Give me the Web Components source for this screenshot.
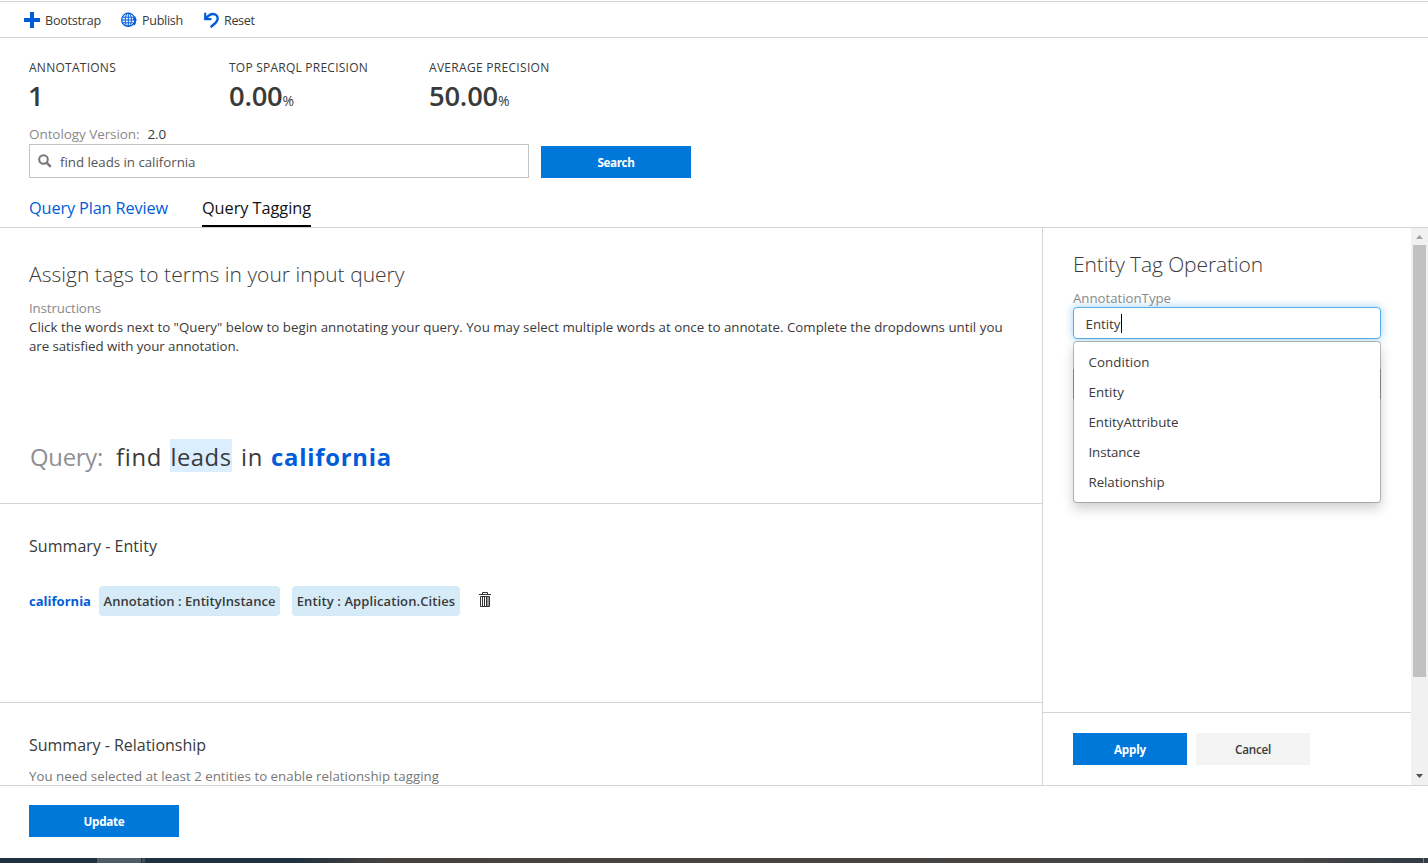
<!DOCTYPE html>
<html lang="en">
<head>
<meta charset="utf-8">
<title>Query Tagging</title>
<style>
html,body{margin:0;height:100%;overflow:hidden;background:#fff}
body{font-family:"Open Sans","Noto Sans",sans-serif;color:#3a3a3a}
</style>
</head>
<body>
<tagging-app></tagging-app>
<script>
const texts = [];
function define(name, html, setup) {
  customElements.define(name, class extends HTMLElement {
    constructor() {
      super();
      this.attachShadow({mode: 'open'}).innerHTML = html;
    }
    connectedCallback() { if (setup) setup(this, this.shadowRoot); }
  });
}

/* One line of text; w is its width in px, s its size, h its line height. */
define('ui-text', `<style>
:host{display:block;white-space:pre;flex:none}
span{display:inline-block;white-space:pre}
</style><span><slot></slot></span>`, (el) => {
  const a = n => el.getAttribute(n);
  if (a('s')) el.style.fontSize = a('s') + 'px';
  if (a('h')) { el.style.lineHeight = a('h') + 'px'; el.style.height = a('h') + 'px'; }
  if (a('wt')) el.style.fontWeight = a('wt');
  if (a('c')) el.style.color = a('c');
  texts.push(el);
});

define('ui-icon', `<style>:host{display:block;flex:none}svg{display:block}</style><div></div>`, (el, root) => {
  const icons = {
    plus: '<svg width="16" height="16" viewBox="0 0 16 16"><path fill="#015cda" d="M6 0h4v6h6v4h-6v6H6v-6H0V6h6z"/></svg>',
    globe: '<svg width="16" height="16" viewBox="0 0 16 16" fill="none" stroke="#015cda"><circle cx="7.3" cy="7.8" r="6.6" stroke-width="1.3"/><ellipse cx="7.3" cy="7.8" rx="3.1" ry="6.6"/><path d="M7.3 1v13.6M1.2 5.2h12.2M.7 8h10M1.4 10.8h11"/><path d="M13 13c1.2-1.6 1.5-3.700 1.200-5.500" stroke-width="1.600"/><path d="M10.600 8.500 14 4l2 4.600z" fill="#015cda" stroke="none"/></svg>',
    undo: '<svg width="15" height="16" viewBox="0 0 15 16" fill="none" stroke="#015cda"><path d="M1.200.800v6.400h6.200" stroke-width="2.200"/><path d="M1.800 6.600C4.200 3.700 6.400 2 8.900 2c2.800 0 4.800 2 4.800 4.500 0 1.900-.9 3.200-2.300 4.500L6.600 15.200" stroke-width="2.400"/></svg>',
    search: '<svg width="14" height="14" viewBox="0 0 14 14" fill="none" stroke="#777"><circle cx="5.500" cy="5.500" r="4.300" stroke-width="2"/><path d="m8.800 8.800 4 4" stroke-width="2.400"/></svg>',
    trash: '<svg width="12" height="16" viewBox="0 0 12 16" fill="none" stroke="#333"><path d="M0 2.500h12M3.500 2V.500h5V2M1.500 4.500h9v10h-9zM3.500 5v9M5.500 5v9M7.500 5v9M9 5v9"/></svg>'
  };
  root.querySelector('div').innerHTML = icons[el.getAttribute('name')];
});

define('command-item', `<style>
:host{display:flex;align-items:center;font-size:13px}
</style><slot name="icon"></slot><slot></slot>`);

define('command-bar', `<style>
:host{display:flex;align-items:center;height:35px;margin-top:1px;padding-left:24px;border-top:1px solid #d4d4d4;border-bottom:1px solid #d4d4d4}
command-item{gap:5px}
ui-text{padding-top:2px}
</style>
<command-item style="width:97px"><ui-icon slot="icon" name="plus"></ui-icon><ui-text w="56" s="12.6" h="18">Bootstrap</ui-text></command-item>
<command-item style="width:83px"><ui-icon slot="icon" name="globe"></ui-icon><ui-text w="41" s="12.6" h="18">Publish</ui-text></command-item>
<command-item><ui-icon slot="icon" name="undo"></ui-icon><ui-text w="30.500" s="12.6" h="18">Reset</ui-text></command-item>`);

define('metric-tile', `<style>
:host{display:block;width:200px}
div{display:flex;align-items:baseline;margin-top:4px;height:32px}
</style><slot name="label"></slot><div><slot></slot></div>`);

define('ui-button', `<style>
:host{display:flex;align-items:center;justify-content:center;box-sizing:border-box;height:32px;width:150px;padding-bottom:1px;background:#0078d9;color:#fff;font-weight:700;flex:none}
:host([plain]){background:#f3f3f3;color:#3a3a3a;font-weight:600}
</style><slot></slot>`);

define('search-field', `<style>
:host{display:flex;align-items:center;box-sizing:border-box;width:500px;height:34px;border:1px solid #c3c3c3;padding-left:8px;gap:8px;color:#555}
ui-icon{margin-top:-1px}
::slotted(ui-text){padding-top:2px}
</style><ui-icon name="search"></ui-icon><slot></slot>`);

define('page-header', `<style>
:host{display:block;box-sizing:border-box;height:190px;padding:22px 0 0 29px;border-bottom:1px solid #d4d4d4}
.row{display:flex}
.version{gap:8px;margin-top:13px}
.search{gap:12px;align-items:flex-end;margin-top:1px}
.tabs{gap:34px;margin-top:16px}
.tab{box-sizing:border-box;height:33px;padding-top:2px}
.on{border-bottom:2px solid #000;width:109px;color:#111}
</style>
<div class="row">
<metric-tile><ui-text slot="label" w="87" s="12" h="16">ANNOTATIONS</ui-text><ui-text s="27.400" h="32" wt="600" style="margin-left:-1px">1</ui-text></metric-tile>
<metric-tile><ui-text slot="label" w="139" s="12" h="16">TOP SPARQL PRECISION</ui-text><ui-text w="53.500" s="27.400" h="32" wt="560">0.00</ui-text><ui-text w="13" s="14" h="32" wt="500">%</ui-text></metric-tile>
<metric-tile><ui-text slot="label" w="120.500" s="12" h="16">AVERAGE PRECISION</ui-text><ui-text w="69" s="27.400" h="32" wt="560">50.00</ui-text><ui-text w="13" s="14" h="32" wt="500">%</ui-text></metric-tile>
</div>
<div class="row version"><ui-text w="110.500" s="13.500" h="18" c="#8a8a8a">Ontology Version:</ui-text><ui-text w="18.500" s="13.500" h="18">2.0</ui-text></div>
<div class="row search"><search-field><ui-text w="135.500" s="13.300" h="18">find leads in california</ui-text></search-field><ui-button><ui-text w="37" s="11.700" h="18">Search</ui-text></ui-button></div>
<div class="row tabs"><div class="tab"><ui-text w="139" s="16.300" h="24" c="#015cda">Query Plan Review</ui-text></div><div class="tab on"><ui-text w="109" s="16.300" h="24">Query Tagging</ui-text></div></div>`);

define('page-section', `<style>
:host{display:block;box-sizing:border-box;padding-left:29px;border-bottom:1px solid #d4d4d4}
:host(:last-of-type){border-bottom:0}
</style><slot></slot>`);

define('query-line', `<style>
:host{display:flex;align-items:center;margin:83px 0 0 1px;height:33px}
ui-text{padding-top:2px;margin-bottom:-2px}
.mark{background:#daeeff;width:62px;height:33px;display:flex;justify-content:center;margin:0 9px 0 8px}
</style>
<ui-text w="73" s="23.800" h="33" c="#8f8f94" style="width:86px">Query:</ui-text>
<ui-text w="46" s="23.800" h="33">find</ui-text>
<div class="mark"><ui-text w="61" s="23.800" h="33">leads</ui-text></div>
<ui-text w="22" s="23.800" h="33" style="width:30px">in</ui-text>
<ui-text w="121" s="23.800" h="33" wt="700" c="#015cda">california</ui-text>`);

define('tag-chip', `<style>
:host{display:flex;align-items:center;justify-content:center;height:30px;background:#d6ebf8;border-radius:4px;font-weight:600;flex:none}
</style><slot></slot>`);

define('entity-row', `<style>
:host{display:flex;align-items:center;height:30px;margin-top:28px}
</style>
<ui-text w="62" s="13" h="18" wt="700" c="#015cda" style="width:70px">california</ui-text>
<tag-chip style="width:181px"><ui-text w="172" s="13" h="18">Annotation : EntityInstance</ui-text></tag-chip>
<tag-chip style="width:168px;margin-left:12px"><ui-text w="158.500" s="13" h="18">Entity : Application.Cities</ui-text></tag-chip>
<ui-icon name="trash" style="margin:-2px 0 0 19px"></ui-icon>`);

define('tagging-pane', `<style>
:host{display:block;width:1042px;height:557px;overflow:hidden;border-right:1px solid #d4d4d4}
</style>
<page-section style="height:276px;padding-top:31px">
<ui-text w="375.500" s="21" h="30" wt="300">Assign tags to terms in your input query</ui-text>
<ui-text w="72" s="13.300" h="19" c="#8a8a8a" style="margin-top:10px">Instructions</ui-text>
<ui-text w="973.500" s="13.300" h="19">Click the words next to "Query" below to begin annotating your query. You may select multiple words at once to annotate. Complete the dropdowns until you</ui-text>
<ui-text w="210" s="13.300" h="19">are satisfied with your annotation.</ui-text>
<query-line></query-line>
</page-section>
<page-section style="height:199px;padding-top:30px"><ui-text w="128" s="16" h="24">Summary - Entity</ui-text><entity-row></entity-row></page-section>
<page-section style="padding-top:30px"><ui-text w="177" s="16" h="24">Summary - Relationship</ui-text><ui-text w="410" s="13.300" h="19" c="#777" style="margin-top:10px">You need selected at least 2 entities to enable relationship tagging</ui-text></page-section>`);

define('type-menu', `<style>
:host{display:block;position:absolute;z-index:2;top:34px;left:0;box-sizing:border-box;width:308px;height:162px;padding:5px 0 0 14.500px;background:#fff;background-clip:padding-box;border:1px solid rgba(0,0,0,.24);border-radius:4px;box-shadow:0 6px 12px rgba(0,0,0,.18)}
</style>
<ui-text w="61" s="13.300" h="30">Condition</ui-text>
<ui-text w="35.500" s="13.300" h="30">Entity</ui-text>
<ui-text w="90" s="13.300" h="30">EntityAttribute</ui-text>
<ui-text w="51.500" s="13.300" h="30">Instance</ui-text>
<ui-text w="76" s="13.300" h="30">Relationship</ui-text>`);

define('type-combo', `<style>
:host{display:block;position:relative;width:308px}
.input{display:flex;align-items:center;box-sizing:border-box;height:32px;padding-left:11.500px;border:1px solid #5aade8;border-radius:4px;box-shadow:0 0 8px rgba(90,173,232,.6);background:#fff}
.input ui-text{padding-top:2px}
i{width:1px;height:19px;background:#000}
.next{box-sizing:border-box;height:30px;margin-top:30px;border:1px solid #bbb}
</style>
<div class="input"><ui-text w="35" s="13.300" h="28">Entity</ui-text><i></i></div>
<div class="next"></div>
<type-menu></type-menu>`);

define('operation-pane', `<style>
:host{display:flex;flex-direction:column;width:368px;height:557px}
.body{flex:1;padding:21px 0 0 30px}
.foot{display:flex;gap:9px;box-sizing:border-box;height:73px;padding:20px 0 0 30px;border-top:1px solid #d4d4d4}
</style>
<div class="body"><ui-text w="190" s="21" h="30" wt="300">Entity Tag Operation</ui-text><ui-text w="98" s="13.300" h="18" c="#8a8a8a" style="margin:10px 0 0">AnnotationType</ui-text><type-combo></type-combo></div>
<div class="foot"><ui-button style="width:114px"><ui-text w="32" s="11.700" h="18">Apply</ui-text></ui-button><ui-button plain style="width:114px"><ui-text w="36" s="11.700" h="18">Cancel</ui-text></ui-button></div>`);

define('scroll-bar', `<style>
:host{display:flex;flex-direction:column;align-items:center;box-sizing:border-box;width:17px;height:557px;background:#f1f1f1}
svg{display:block}
.thumb{width:13px;height:432px;background:#c1c1c1}
.gap{flex:1}
</style>
<svg width="17" height="17"><path fill="#a3a3a3" d="M5 11 8.500 7 12 11z"/></svg><div class="thumb"></div><div class="gap"></div><svg width="17" height="17"><path fill="#505050" d="M5 6h7L8.500 10z"/></svg>`);

define('task-strip', `<style>
:host{display:flex;height:5px;background:linear-gradient(90deg,#1f303f 0,#1f303f 290px,#454240 380px,#484644 1300px,#343c46 1400px)}
.a{width:44px;margin-left:97px;background:#4e5c68}
.b{width:3px;margin-left:1px;background:#3d4c59}
.c{width:1px;margin-left:auto;margin-right:4px;background:#777d84}
</style><div class="a"></div><div class="b"></div><div class="c"></div>`);

define('tagging-app', `<style>
:host{display:flex;flex-direction:column;width:1428px;height:863px;overflow:hidden}
.main{display:flex;height:557px;flex:none}
.foot{box-sizing:border-box;height:73px;padding:19px 0 0 29px;border-top:1px solid #d4d4d4}
</style>
<command-bar></command-bar><page-header></page-header>
<div class="main"><tagging-pane></tagging-pane><operation-pane></operation-pane><scroll-bar></scroll-bar></div>
<div class="foot"><ui-button><ui-text w="41" s="11.700" h="18">Update</ui-text></ui-button></div>
<task-strip></task-strip>`);

/* Spread each line's letters over the width it asks for. */
for (const el of texts) {
  const w = parseFloat(el.getAttribute('w'));
  if (!w) continue;
  const span = el.shadowRoot.querySelector('span');
  const n = el.textContent.length;
  if (n > 1) {
    const gap = (w - span.getBoundingClientRect().width) / n;
    span.style.letterSpacing = gap.toFixed(3) + 'px';
  }
}
</script>
</body>
</html>
